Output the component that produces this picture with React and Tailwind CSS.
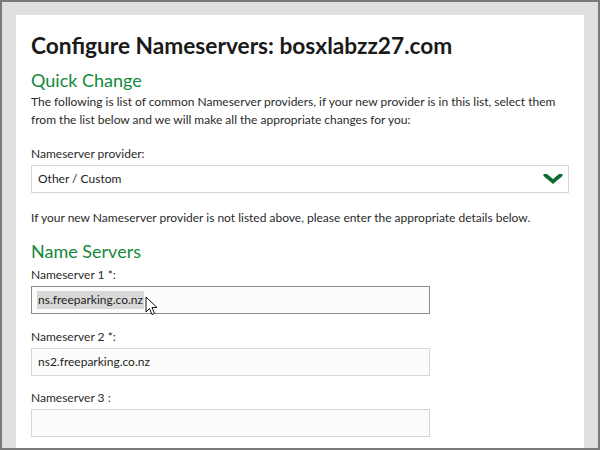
import React from "react";

function Chevron() {
  return (
    <svg width="20" height="12" viewBox="0 0 20 12" className="block">
      <path d="M0.5 1 L4 1 L10 6 L16 1 L19.5 1 L19.5 3 L10 11 L0.5 3 Z" fill="#0b6b2c" />
    </svg>
  );
}

function Cursor() {
  return (
    <svg width="14" height="22" viewBox="0 0 14 22" className="absolute left-[calc(100%+1px)] top-[5px]">
      <path
        d="M1 1 L1 16 L4.5 12.5 L7 18.5 L9.5 17.5 L7 11.5 L12 11.5 Z"
        fill="#ffffff"
        stroke="#111111"
        strokeWidth="1"
        strokeLinejoin="round"
      />
    </svg>
  );
}

export default function App() {
  const font = { fontFamily: "Lato, 'Open Sans', 'Liberation Sans', sans-serif" };
  return (
    <div
      className="w-[600px] h-[450px] box-border border-2 border-[#7a7a7a] bg-[#e0e0e0] pl-[14px] pr-[14px] pt-[13px] overflow-hidden flex flex-col"
      style={font}
    >
      <div className="flex-1 bg-white pl-[15px] pr-[15px] pt-[17px]">
        <h1 className="text-[22.7px] leading-[28px] font-bold text-[#1a1a1a]">
          Configure Nameservers: bosxlabzz27.com
        </h1>
        <h2 className="mt-[8px] text-[18px] leading-[24px] text-[#14893a]">Quick Change</h2>
        <p className="mt-[1px] text-[12px] leading-[18px] text-[#2a2a2a] whitespace-nowrap">
          The following is list of common Nameserver providers, if your new provider is in this list, select them
          <br />
          from the list below and we will make all the appropriate changes for you:
        </p>
        <div className="mt-[16px] text-[12px] leading-[18px] text-[#2a2a2a]">Nameserver provider:</div>
        <div className="mt-[2px] w-[538px] h-[28px] box-border border border-[#d6d6d6] bg-white flex items-center justify-between pl-[6px] pr-[5px]">
          <span className="text-[12px] leading-[18px] text-[#1e1e1e]">Other / Custom</span>
          <Chevron />
        </div>
        <p className="mt-[16px] text-[12px] leading-[18px] text-[#2a2a2a] whitespace-nowrap">
          If your new Nameserver provider is not listed above, please enter the appropriate details below.
        </p>
        <h2 className="mt-[12px] text-[18px] leading-[24px] text-[#14893a]">Name Servers</h2>
        <div className="mt-[3px] text-[12px] leading-[18px] text-[#2a2a2a]">Nameserver 1 *:</div>
        <div className="mt-[2px] w-[399px] h-[28px] box-border border border-[#8c8c8c] bg-[#fcfcfa] flex items-center pl-[5px]">
          <span className="relative inline-block text-[12px] leading-[18px] text-[#1e1e1e] bg-[#d8d8d8] px-[1px]">
            ns.freeparking.co.nz
            <Cursor />
          </span>
        </div>
        <div className="mt-[14px] text-[12px] leading-[18px] text-[#2a2a2a]">Nameserver 2 *:</div>
        <div className="mt-[2px] w-[399px] h-[28px] box-border border border-[#d6d6d6] bg-[#fcfcfa] flex items-center pl-[6px]">
          <span className="text-[12px] leading-[18px] text-[#1e1e1e]">ns2.freeparking.co.nz</span>
        </div>
        <div className="mt-[13px] text-[12px] leading-[18px] text-[#2a2a2a]">Nameserver 3 :</div>
        <div className="mt-[2px] w-[399px] h-[28px] box-border border border-[#d6d6d6] bg-[#fcfcfa]"></div>
      </div>
    </div>
  );
}
